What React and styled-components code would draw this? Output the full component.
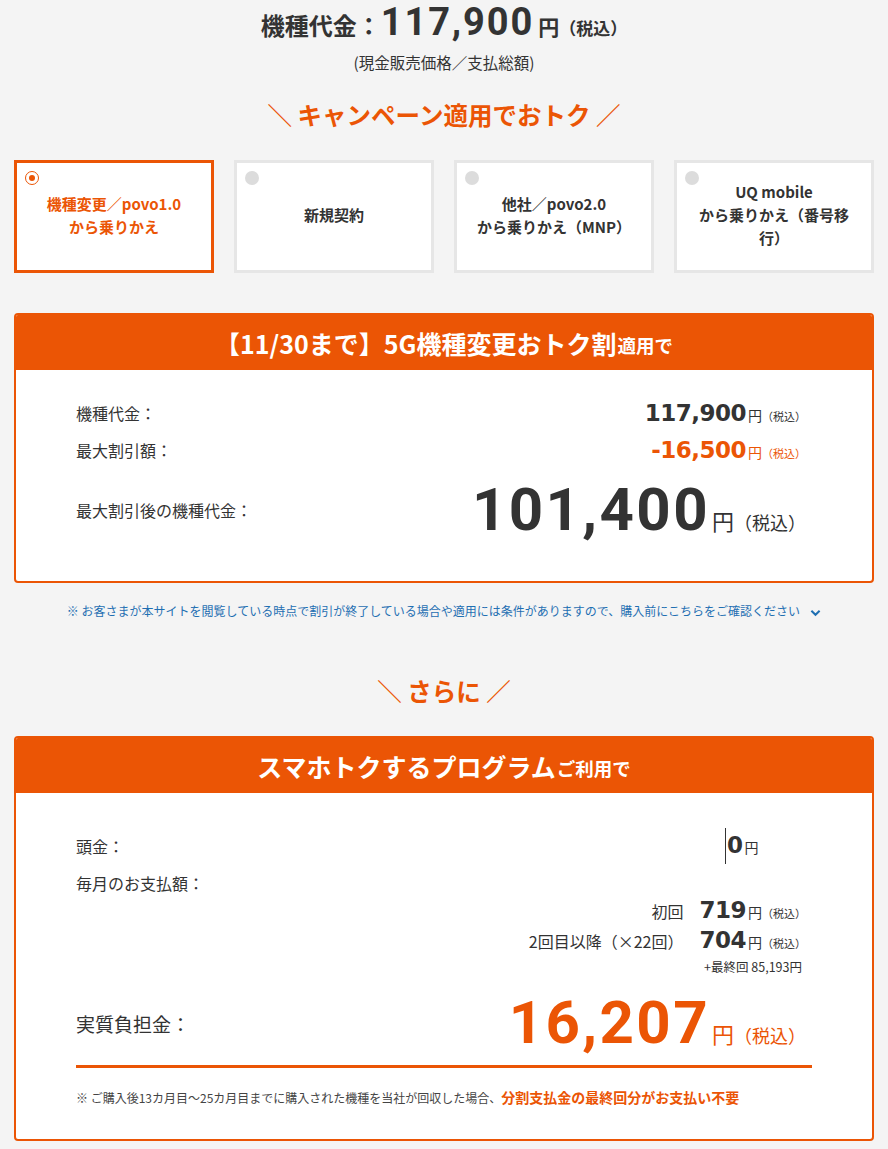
import React from 'react';
import styled, { createGlobalStyle } from 'styled-components';

const ORANGE = '#eb5505';
const TEXT = '#333';

const GlobalStyle = createGlobalStyle`
  html, body {
    margin: 0;
    padding: 0;
    background: #f4f4f4;
  }
  body {
    font-family: "Noto Sans CJK JP", "Noto Sans", sans-serif;
    color: ${TEXT};
  }
`;

const plans = [
  { id: 'change', lines: ['機種変更／povo1.0', 'から乗りかえ'], selected: true },
  { id: 'new', lines: ['新規契約'] },
  { id: 'mnp', lines: ['他社／povo2.0', 'から乗りかえ（MNP）'] },
  { id: 'uq', lines: ['UQ mobile', 'から乗りかえ（番号移', '行）'] },
];

const Tax = ({ size, color }) => <TaxText size={size} color={color}>（税込）</TaxText>;

const App = () => (
  <>
    <GlobalStyle />
    <Page>
      <PriceHead>
        <HeadLabel>機種代金：</HeadLabel>
        <HeadNum>117,900</HeadNum>
        <Yen size={21} bold>円</Yen>
        <TaxText size={17} bold>（税込）</TaxText>
      </PriceHead>
      <SubNote>(現金販売価格／支払総額)</SubNote>

      <Catch top={25} bottom={28}>＼ キャンペーン適用でおトク ／</Catch>

      <PlanGrid>
        {plans.map((p) => (
          <PlanCard key={p.id} selected={p.selected}>
            <Radio selected={p.selected} />
            <PlanText selected={p.selected}>
              {p.lines.map((l) => (
                <div key={l}>{l}</div>
              ))}
            </PlanText>
          </PlanCard>
        ))}
      </PlanGrid>

      <Box top={40}>
        <BoxHead>
          【11/30まで】5G機種変更おトク割<small>適用で</small>
        </BoxHead>
        <BoxBody pad="24px 60px 31px">
          <Row>
            <Label>機種代金：</Label>
            <Value>
              <MidNum>117,900</MidNum>
              <Yen size={14}>円</Yen>
              <Tax size={11} />
            </Value>
          </Row>
          <Row>
            <Label>最大割引額：</Label>
            <Value>
              <MidNum color={ORANGE}>-16,500</MidNum>
              <Yen size={14} color={ORANGE}>円</Yen>
              <Tax size={11} color={ORANGE} />
            </Value>
          </Row>
          <Row gap="2px">
            <Label>最大割引後の機種代金：</Label>
            <Value>
              <BigNum>101,400</BigNum>
              <Yen size={22}>円</Yen>
              <Tax size={18} />
            </Value>
          </Row>
        </BoxBody>
      </Box>

      <Notice>
        ※ お客さまが本サイトを閲覧している時点で割引が終了している場合や適用には条件がありますので、購入前にこちらをご確認ください
        <Chevron viewBox="0 0 12 8">
          <path d="M1.5 1.5 L6 6 L10.5 1.5" fill="none" stroke="currentColor" strokeWidth="2.2" />
        </Chevron>
      </Notice>

      <Catch top={54} bottom={28}>＼ さらに ／</Catch>

      <Box top={0}>
        <BoxHead>
          スマホトクするプログラム<small>ご利用で</small>
        </BoxHead>
        <BoxBody pad="34px 60px 31px">
          <Row>
            <Label>頭金：</Label>
            <DownValue>
              <MidNum>0</MidNum>
              <Yen size={14}>円</Yen>
            </DownValue>
          </Row>
          <Row>
            <Label>毎月のお支払額：</Label>
          </Row>
          <Monthly>
            <MonthRow>
              <MonthLabel>初回</MonthLabel>
              <MidNum>719</MidNum>
              <Yen size={14}>円</Yen>
              <Tax size={11} />
            </MonthRow>
            <MonthRow>
              <MonthLabel>2回目以降（×22回）</MonthLabel>
              <MidNum>704</MidNum>
              <Yen size={14}>円</Yen>
              <Tax size={11} />
            </MonthRow>
            <FinalNote>+最終回 85,193円</FinalNote>
          </Monthly>
          <TotalRow>
            <TotalLabel>実質負担金：</TotalLabel>
            <Value>
              <BigNum color={ORANGE}>16,207</BigNum>
              <Yen size={22} color={ORANGE}>円</Yen>
              <Tax size={18} color={ORANGE} />
            </Value>
          </TotalRow>
          <SmallNote>
            ※ ご購入後13カ月目〜25カ月目までに購入された機種を当社が回収した場合、
            <strong>分割支払金の最終回分がお支払い不要</strong>
          </SmallNote>
        </BoxBody>
      </Box>
    </Page>
  </>
);

export default App;

const Page = styled.div`
  width: 860px;
  margin: 0 auto;
  padding: 0 0 10px;
  display: flex;
  flex-direction: column;
`;

const PriceHead = styled.div`
  display: flex;
  justify-content: center;
  align-items: baseline;
  height: 44px;
  line-height: 44px;
  color: ${TEXT};
`;

const HeadLabel = styled.span`
  font-size: 24px;
  font-weight: 700;
`;

const HeadNum = styled.span`
  font-family: Roboto, "Liberation Sans", sans-serif;
  font-size: 38px;
  font-weight: 700;
  margin-right: 2px;
  letter-spacing: 0.05em;
`;

const Yen = styled.span`
  font-size: ${(p) => p.size}px;
  font-weight: ${(p) => (p.bold ? 700 : 400)};
  color: ${(p) => p.color || TEXT};
  margin-left: 2px;
`;

const TaxText = styled.span`
  font-size: ${(p) => p.size}px;
  font-weight: ${(p) => (p.bold ? 700 : 400)};
  color: ${(p) => p.color || TEXT};
`;

const SubNote = styled.div`
  text-align: center;
  font-size: 15.5px;
  line-height: 22px;
  margin-top: 7px;
`;

const Catch = styled.div`
  text-align: center;
  color: ${ORANGE};
  font-size: 24.5px;
  line-height: 34px;
  font-weight: 700;
  margin-top: ${(p) => p.top}px;
  margin-bottom: ${(p) => p.bottom}px;
`;

const PlanGrid = styled.div`
  display: grid;
  grid-template-columns: repeat(4, 200px);
  gap: 20px;
`;

const PlanCard = styled.div`
  position: relative;
  box-sizing: border-box;
  height: 113px;
  background: #fff;
  border: 3px solid ${(p) => (p.selected ? ORANGE : '#e6e6e6')};
  display: flex;
  align-items: center;
  justify-content: center;
  padding: 0 14px;
`;

const Radio = styled.span`
  position: absolute;
  top: 8px;
  left: 8px;
  width: 14px;
  height: 14px;
  border-radius: 50%;
  box-sizing: border-box;
  background: ${(p) => (p.selected ? '#fff' : '#dcdcdc')};
  border: ${(p) => (p.selected ? `1.5px solid ${ORANGE}` : 'none')};
  &::after {
    content: '';
    display: ${(p) => (p.selected ? 'block' : 'none')};
    position: absolute;
    top: 2.5px;
    left: 2.5px;
    width: 6px;
    height: 6px;
    border-radius: 50%;
    background: ${ORANGE};
  }
`;

const PlanText = styled.div`
  text-align: center;
  font-size: 15px;
  font-weight: 700;
  line-height: 23px;
  color: ${(p) => (p.selected ? ORANGE : TEXT)};
  margin-top: -4px;
`;

const Box = styled.section`
  margin-top: ${(p) => p.top}px;
  border-radius: 4px;
  overflow: hidden;
  border: 2px solid ${ORANGE};
  background: #fff;
`;

const BoxHead = styled.h2`
  margin: 0;
  height: 55px;
  background: ${ORANGE};
  color: #fff;
  font-size: 25px;
  font-weight: 700;
  display: flex;
  align-items: center;
  justify-content: center;
  small {
    font-size: 18.5px;
    font-weight: 700;
    margin-left: 1px;
    margin-top: 4px;
  }
`;

const BoxBody = styled.div`
  padding: ${(p) => p.pad};
`;

const Row = styled.div`
  display: flex;
  justify-content: space-between;
  align-items: center;
  min-height: 37px;
  margin-top: ${(p) => p.gap || 0};
`;

const Label = styled.span`
  font-size: 16px;
  color: ${TEXT};
`;

const Value = styled.span`
  display: flex;
  align-items: baseline;
  margin-right: 6px;
`;

const MidNum = styled.span`
  font-family: "DejaVu Sans", Verdana, sans-serif;
  font-size: 23px;
  font-weight: 700;
  color: ${(p) => p.color || TEXT};
  letter-spacing: -0.5px;
`;

const BigNum = styled.span`
  font-family: Roboto, "Liberation Sans", sans-serif;
  font-size: 60px;
  font-weight: 700;
  line-height: 80px;
  color: ${(p) => p.color || TEXT};
  letter-spacing: 0.04em;
`;

const DownValue = styled.span`
  display: flex;
  align-items: baseline;
  width: 85px;
  border-left: 1px solid ${TEXT};
  line-height: 34px;
  padding-left: 1px;
`;

const Monthly = styled.div`
  display: flex;
  flex-direction: column;
  align-items: flex-end;
  margin-top: -6px;
  margin-right: 6px;
`;

const MonthRow = styled.div`
  display: flex;
  align-items: baseline;
  height: 30px;
  line-height: 30px;
`;

const MonthLabel = styled.span`
  font-size: 16px;
  margin-right: 16px;
`;

const FinalNote = styled.div`
  font-size: 12.5px;
  line-height: 16px;
  margin-right: 4px;
  margin-top: 4px;
`;

const TotalRow = styled.div`
  display: flex;
  justify-content: space-between;
  align-items: center;
  height: 80px;
  margin-top: 8px;
  padding-bottom: 2px;
  border-bottom: 3px solid ${ORANGE};
`;

const TotalLabel = styled.span`
  font-size: 19px;
  margin-top: 0;
`;

const SmallNote = styled.p`
  margin: 19px 0 0;
  font-size: 12px;
  line-height: 20px;
  color: #444;
  strong {
    color: ${ORANGE};
    font-size: 14px;
    font-weight: 700;
  }
`;

const Notice = styled.p`
  margin: 19px 0 0;
  text-align: center;
  font-size: 12px;
  line-height: 18px;
  color: #1f6fb2;
`;

const Chevron = styled.svg`
  width: 11px;
  height: 8px;
  margin-left: 10px;
  vertical-align: middle;
`;
